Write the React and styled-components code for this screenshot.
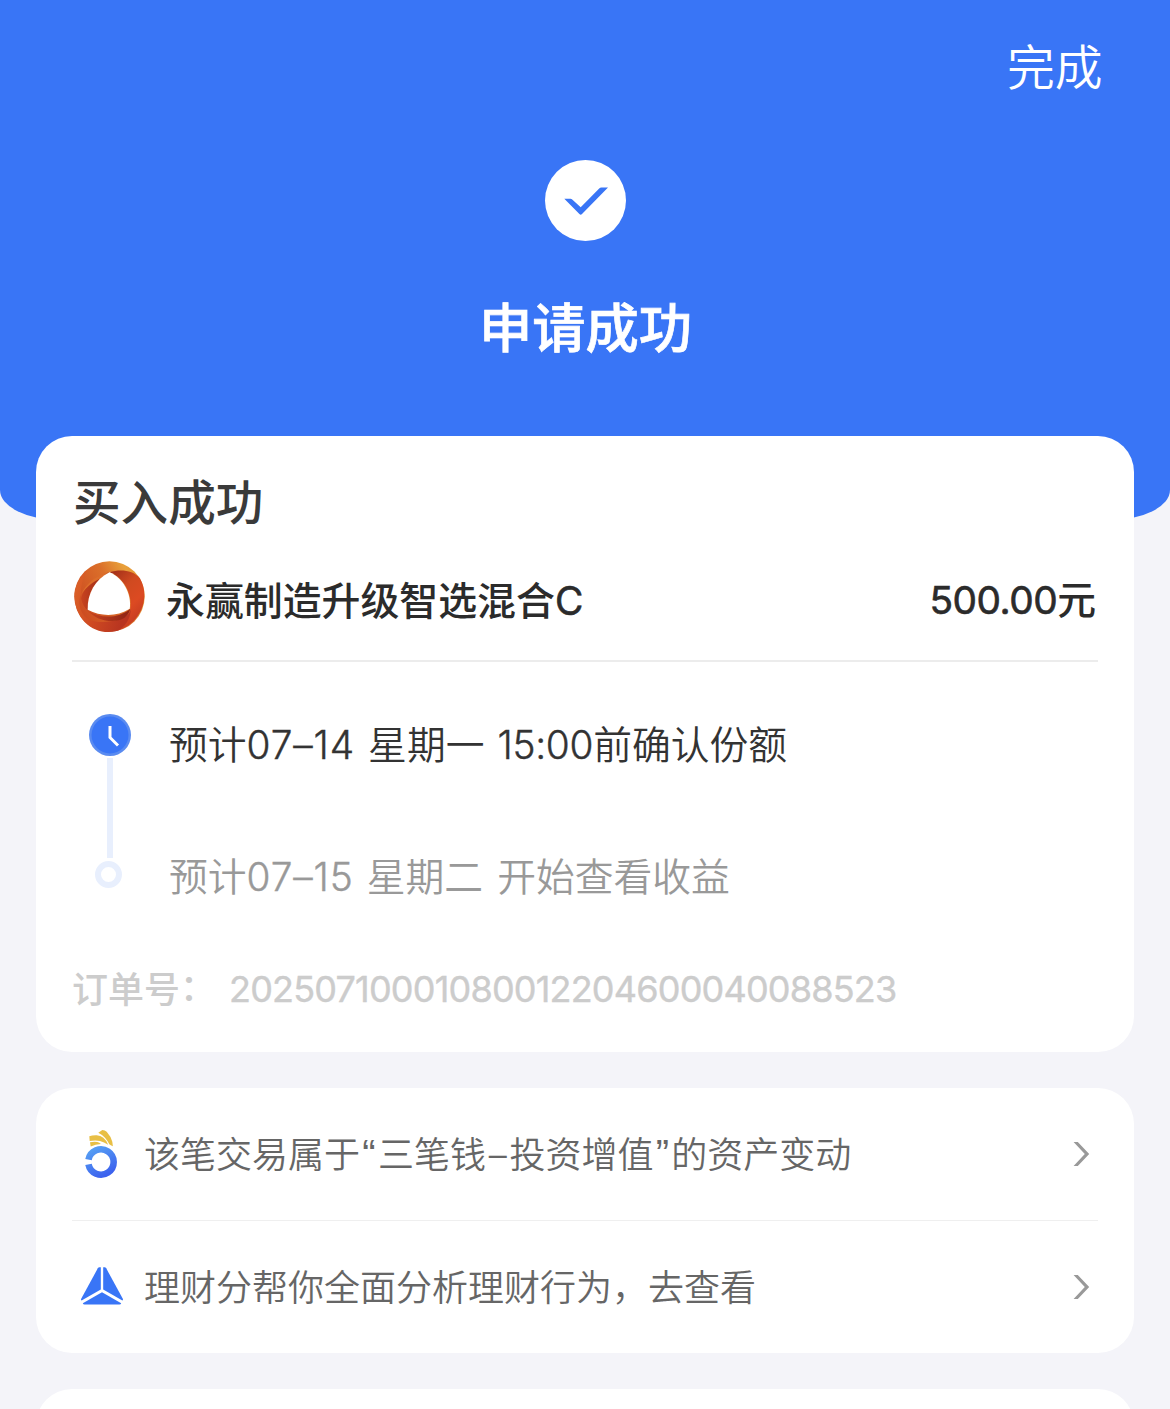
import React from 'react'
import styled, { createGlobalStyle } from 'styled-components'

function App() {
  return (
    <Page>
      <GlobalStyle />
      <Header>
        <Done>完成</Done>
        <StatusIcon viewBox="0 0 82 82">
          <circle cx="41.500" cy="41.500" r="40.500" fill="#fff" />
          <path d="M20.300 39.700 H26.500 Q27.500 39.700 28.200 40.400 L36.700 48.200 L55.200 29.500 Q56.200 28.500 57.300 28.500 H64 L38 55 Q36.700 56.400 35.400 55 Z" fill="#3975f6" />
        </StatusIcon>
        <StatusTitle>申请成功</StatusTitle>
      </Header>
      <Cards>
        <OrderCard>
          <CardTitle>买入成功</CardTitle>
          <FundRow>
            <FundLogo />
            <FundName>永赢制造升级智选混合<Latin $weight={400} $stroke="0.6px">C</Latin></FundName>
            <Amount><Latin $weight={400} $stroke="0.6px" $spacing="-0.5px">500.00</Latin>元</Amount>
          </FundRow>
          <Timeline>
            <Track>
              <ClockIcon />
              <Line />
              <Dot />
            </Track>
            <Steps>
              <Step>
                预计<Latin $stroke="0.4px" $spacing="0.9px">07–14</Latin><Gap />星期一<Gap /><Latin $stroke="0.4px" $spacing="-0.3px">15:00</Latin>前确认份额
              </Step>
              <Step $pending>
                预计<Latin $stroke="0.4px" $spacing="0.9px">07–15</Latin><Gap />星期二<Gap $wide />开始查看收益
              </Step>
            </Steps>
          </Timeline>
          <OrderNumber>
            <OrderLabel>订单号<Colon>：</Colon></OrderLabel>
            <Latin $weight={400} $stroke="0.4px" $spacing="-0.8px">20250710001080012204600040088523</Latin>
          </OrderNumber>
        </OrderCard>
        <LinksCard>
          <LinkRow>
            <AssetIcon />
            <LinkText>
              该笔交易属于<Quote>“</Quote>三笔钱<Dash>–</Dash>投资增值<Quote>”</Quote>的资产变动
            </LinkText>
            <Arrow />
          </LinkRow>
          <LinkRow>
            <ScoreIcon />
            <LinkText>理财分帮你全面分析理财行为，去查看</LinkText>
            <Arrow />
          </LinkRow>
        </LinksCard>
        <NextCard />
      </Cards>
    </Page>
  )
}

export default App

function FundLogo() {
  return (
    <Logo viewBox="0 0 70 70">
      <defs>
        <linearGradient id="ringTop" x1="0" y1="0.6" x2="1" y2="0">
          <stop offset="0" stopColor="#cc4a20" />
          <stop offset="0.5" stopColor="#db6f2a" />
          <stop offset="0.75" stopColor="#e8a03a" />
          <stop offset="1" stopColor="#e08a30" />
        </linearGradient>
        <linearGradient id="ringRight" x1="0" y1="0" x2="0.6" y2="1">
          <stop offset="0" stopColor="#9c2c18" />
          <stop offset="0.4" stopColor="#d04a20" />
          <stop offset="0.7" stopColor="#dc4a22" />
          <stop offset="1" stopColor="#c23a20" />
        </linearGradient>
        <linearGradient id="ringBottom" x1="0" y1="0" x2="1" y2="0.3">
          <stop offset="0" stopColor="#dd6528" />
          <stop offset="0.5" stopColor="#cf4a22" />
          <stop offset="1" stopColor="#b83520" />
        </linearGradient>
        <linearGradient id="ringFold" x1="0" y1="0" x2="1" y2="0">
          <stop offset="0" stopColor="#c8431f" />
          <stop offset="1" stopColor="#8e2415" />
        </linearGradient>
      </defs>
      <circle cx="35" cy="35" r="34.7" fill="url(#ringTop)" />
      <path d="M35 11 C46 8 58 9 65 17 C75 34 68 61 42 69 C53 62 57 50 55.500 38 C54 26 46 15 35 11 Z" fill="url(#ringRight)" />
      <path d="M13.500 45 C9 41 7 37 7 32 C4 40 5 48 10 54 C17 62 32 61 43 58 C51 56 55 52 56 47 C56 57 50 66 42 69 C22 74 0 60 0.500 32 C2 22 7 14 13 9 C8 18 6 27 7 36 Z" fill="url(#ringBottom)" />
      <path d="M13.500 49 C26 57 44 57 55.500 47 C54 53 50 57 44 58.500 C33 61 21 57 13.500 49 Z" fill="url(#ringFold)" />
      <path d="M35 11 C20 15 9 27 7 37 C8 42 10 46 14 49 C12 34 20 19 35 11 Z" fill="url(#ringFold)" />
      <path d="M34 11 C22 14 12 22 7 33 C12 26 19 20 27 17 Z" fill="#dc6d2a" />
      <path d="M35 11 C48 16 57 32 55 47 C42 55 27 55 13.500 48 C13 32 21 18 35 11 Z" fill="#fff" />
    </Logo>
  )
}

function ClockIcon() {
  return (
    <Clock viewBox="0 0 42 42">
      <circle cx="21" cy="21" r="21" fill="#5a8bf0" />
      <circle cx="21" cy="21" r="18.5" fill="#3975f6" />
      <path d="M21 12 V23.500 L29 31.500" fill="none" stroke="#fff" strokeWidth="3" />
    </Clock>
  )
}

function AssetIcon() {
  return (
    <RowIcon viewBox="0 0 44 52">
      <defs>
        <linearGradient id="asset" x1="0.2" y1="0" x2="0.7" y2="1">
          <stop offset="0" stopColor="#559cf3" />
          <stop offset="1" stopColor="#3c62ee" />
        </linearGradient>
      </defs>
      <path d="M8.500 31.600 A12.700 12.700 0 1 1 8.500 36.400" fill="none" stroke="url(#asset)" strokeWidth="6.600" />
      <g fill="#e8bf45">
        <path d="M18.300 4.700 L22.300 2 Q25 2 26.700 3.700 Q31 8.500 32.300 13.700 L32.900 18.200 Q30.500 17.500 29.300 16.300 Q27.500 12.500 25 9.700 Q22 6.500 18.300 4.700 Z" />
        <path d="M9.300 8.300 Q12.500 7 16.700 7.200 Q20.500 7.600 23.300 9.700 Q26.500 12.300 28.200 16.700 Q24 13.900 20 12.900 Q14.500 12 9.700 13.100 Z" />
        <path d="M10 14.300 Q13.500 13.400 17.300 13.900 Q19.500 14.400 20.900 16 Q15.500 16.200 10.700 18.600 Z" />
      </g>
    </RowIcon>
  )
}

function ScoreIcon() {
  return (
    <RowIcon viewBox="0 0 44 52">
      <g fill="#3975f6">
        <path d="M19.300 6.300 H20.800 V28.600 L1.600 39.600 Q0.600 39 1.200 37.800 L17.800 7.300 Q18.400 6.300 19.300 6.300 Z" />
        <path d="M24.700 6.300 H23.200 V28.600 L42.400 39.600 Q43.400 39 42.800 37.800 L26.200 7.300 Q25.600 6.300 24.700 6.300 Z" />
        <path d="M22 31.200 L41.200 42.200 Q40.800 43.400 39.500 43.400 H4.500 Q3.200 43.400 2.800 42.200 Z" />
      </g>
    </RowIcon>
  )
}

function Arrow() {
  return (
    <Chevron viewBox="0 0 18 26">
      <path d="M1.600 1 H5.800 L17.200 13 L5.800 25 H1.600 L12.800 13 Z" fill="#999" />
    </Chevron>
  )
}

const GlobalStyle = createGlobalStyle`
  body {
    margin: 0;
    background: #f4f4f9;
    font-family: Inter, 'Noto Sans CJK SC', sans-serif;
    font-weight: 350;
  }

  * {
    box-sizing: border-box;
  }
`

const Page = styled.div`
  height: 1409px;
  overflow: hidden;
`

const Header = styled.header`
  display: flex;
  flex-direction: column;
  align-items: center;
  height: 520px;
  padding-top: 38px;
  background: #3975f6;
  border-radius: 0 0 60px 60px / 0 0 30px 30px;
  color: #fff;
`

const Done = styled.div`
  align-self: flex-end;
  margin-right: 67.5px;
  font-size: 47.8px;
  line-height: 60px;
`

const StatusIcon = styled.svg`
  width: 82px;
  height: 82px;
  margin-top: 61px;
`

const StatusTitle = styled.h1`
  margin: 54px 0 0;
  padding-left: 1px;
  font-size: 53.3px;
  font-weight: 500;
  line-height: 68px;
  -webkit-text-stroke: 0.7px #fff;
`

const Cards = styled.main`
  display: flex;
  flex-direction: column;
  gap: 36px;
  margin-top: -84px;
  padding: 0 36px;
`

const Card = styled.section`
  flex: none;
  padding: 0 36px;
  background: #fff;
  border-radius: 36px;
`

const OrderCard = styled(Card)`
  height: 616px;
`

const CardTitle = styled.h2`
  height: 96px;
  margin: 0;
  padding: 37px 0 0 1px;
  color: #3a3a3a;
  font-size: 47.6px;
  font-weight: 500;
  line-height: 60px;
`

const FundRow = styled.div`
  display: flex;
  align-items: center;
  height: 130px;
  padding: 0 2px;
  border-bottom: 2px solid #ececec;
  color: #2b2b2b;
  font-size: 38.8px;
  font-weight: 500;
`

const Logo = styled.svg`
  width: 71px;
  height: 71px;
`

const FundName = styled.div`
  flex: 1;
  margin-left: 21px;
  padding-top: 3px;
  font-size: 38.9px;
`

const Amount = styled.div`
  padding-top: 1px;
  white-space: nowrap;
`

const Latin = styled.span`
  font-family: Inter, sans-serif;
  font-weight: ${props => props.$weight || 'inherit'};
  letter-spacing: ${props => props.$spacing || '0'};
  -webkit-text-stroke: ${props => props.$stroke || '0'} currentColor;
`

const Timeline = styled.div`
  display: flex;
  height: 264px;
  padding-top: 52px;
`

const Track = styled.div`
  display: flex;
  flex-direction: column;
  align-items: center;
  width: 75px;
`

const Clock = styled.svg`
  width: 42px;
  height: 42px;
`

const Line = styled.div`
  width: 6px;
  height: 100px;
  margin: 2px 0 3px;
  background: #e8effd;
`

const Dot = styled.div`
  width: 27px;
  height: 27px;
  margin-right: 3px;
  border: 6px solid #e8effd;
  border-radius: 50%;
`

const Steps = styled.div`
  display: flex;
  flex-direction: column;
  gap: 72px;
  margin-left: 22px;
`

const Step = styled.div`
  padding-top: 1px;
  color: ${props => props.$pending ? '#999' : '#333'};
  font-size: 38.8px;
  line-height: 59px;
  white-space: nowrap;
`

const Gap = styled.span`
  display: inline-block;
  width: ${props => props.$wide ? '14px' : '13px'};
`

const OrderNumber = styled.div`
  display: flex;
  align-items: center;
  height: 126px;
  color: #ccc;
  font-size: 36px;
  font-weight: 500;
`

const OrderLabel = styled.span`
  width: 157px;
  padding-bottom: 4px;
`

const Colon = styled.span`
  line-height: 1;
  vertical-align: 2px;
`

const LinksCard = styled(Card)`
  height: 265px;
`

const LinkRow = styled.div`
  display: flex;
  align-items: center;
  height: 132px;
  padding: 0 8px;

  & + & {
    height: 133px;
    padding-bottom: 1px;
    border-top: 1px solid #efefef;
  }
`

const RowIcon = styled.svg`
  width: 44px;
  height: 52px;
`

const LinkText = styled.div`
  flex: 1;
  margin-left: 20px;
  padding-top: 2px;
  color: #666;
  font-size: 36px;
  line-height: 52px;
  white-space: nowrap;
`

const Quote = styled.span`
  display: inline-block;
  width: 17.9px;
  font-family: 'Liberation Sans', sans-serif;
  font-size: 40px;
  line-height: 1;
  text-align: center;
`

const Dash = styled.span`
  display: inline-block;
  width: 23.5px;
  line-height: 1;
  text-align: center;
`

const Chevron = styled.svg`
  width: 18px;
  height: 26px;
`

const NextCard = styled(Card)`
  height: 100px;
`
